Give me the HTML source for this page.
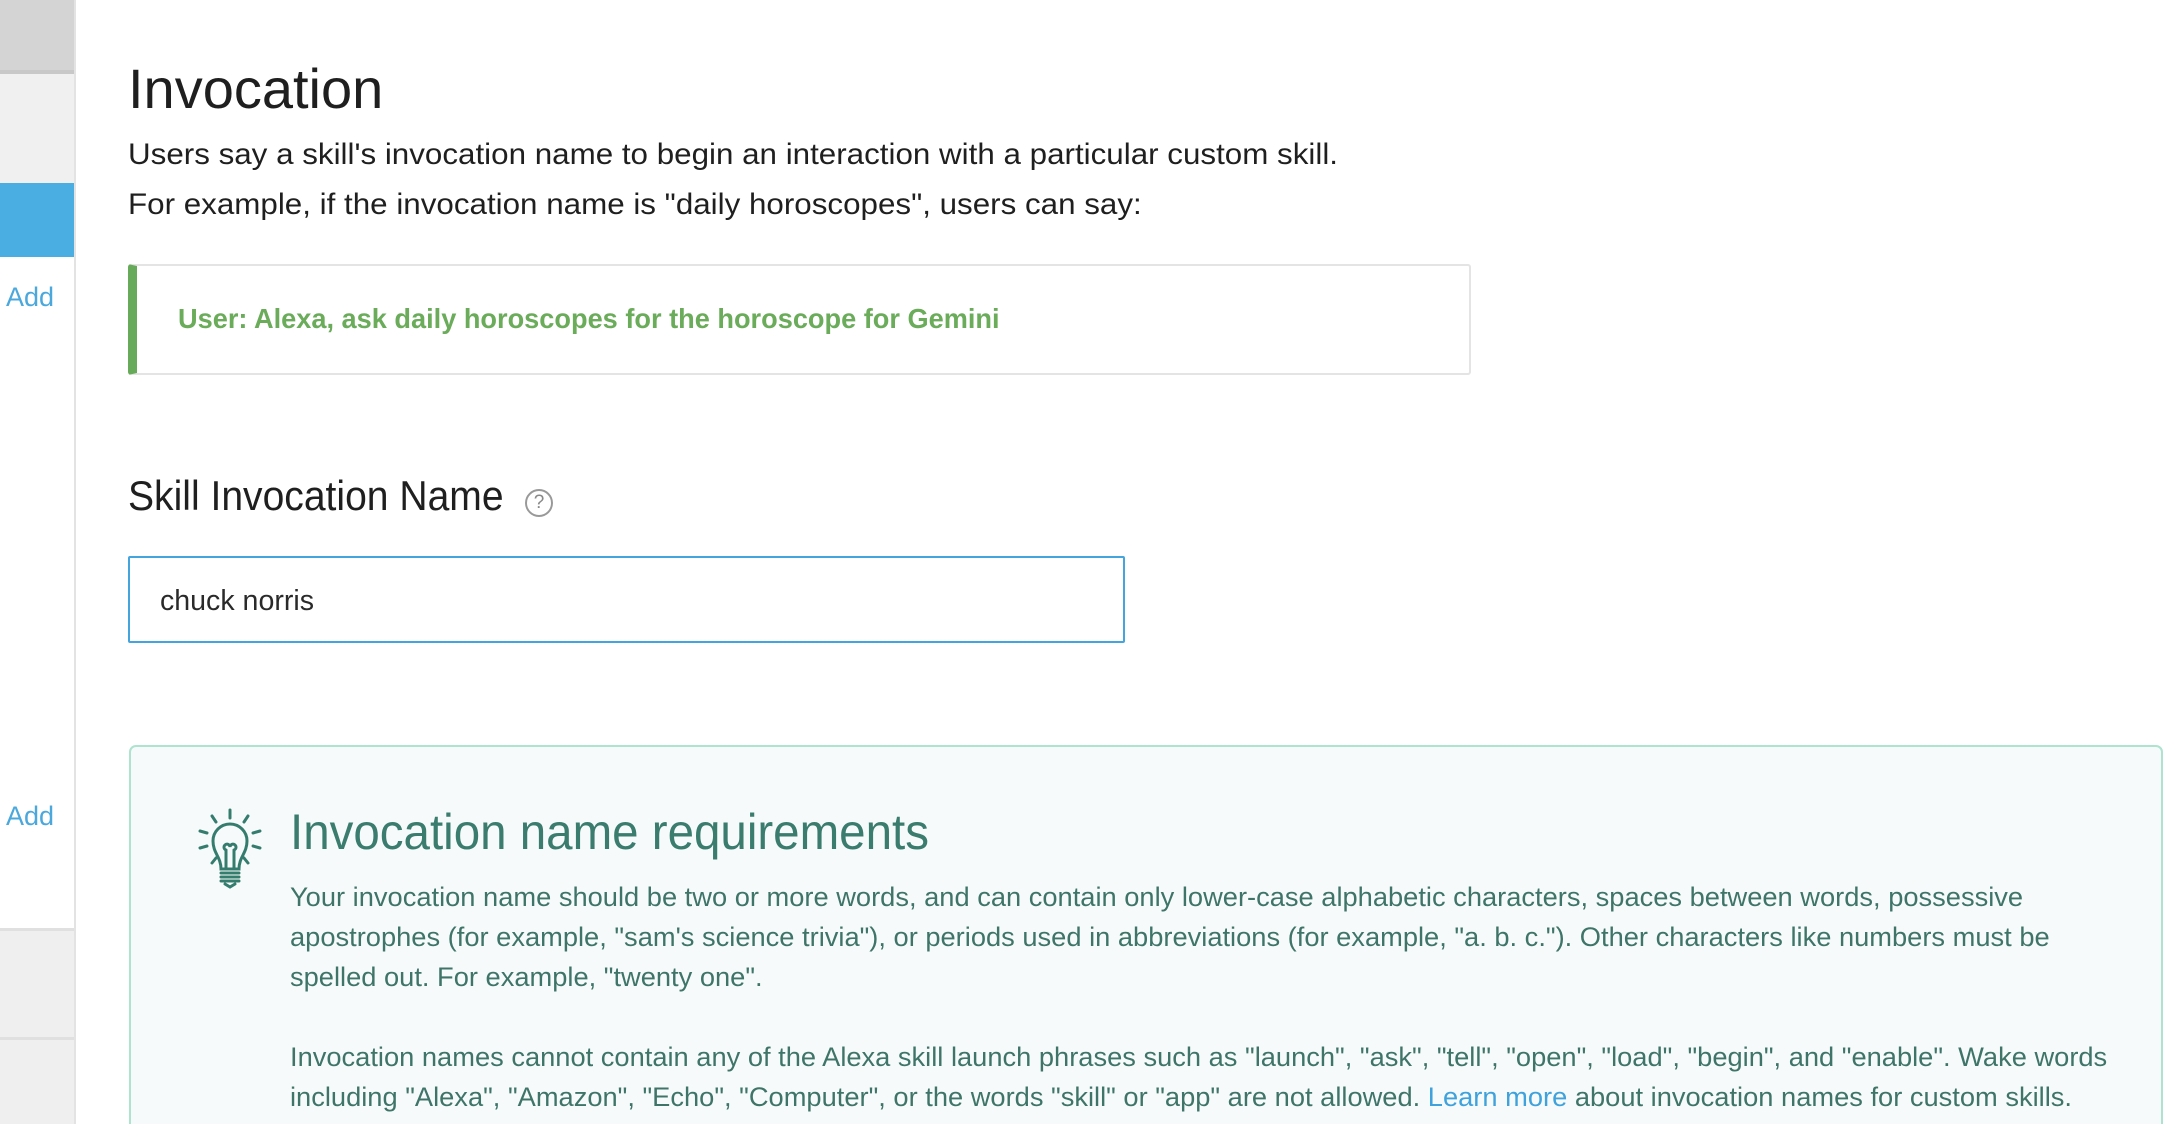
<!DOCTYPE html>
<html><head><meta charset="utf-8"><style>
*{margin:0;padding:0;box-sizing:border-box}
html,body{width:2178px;height:1124px;overflow:hidden;background:#fff;font-family:"Liberation Sans",sans-serif}
#w{position:relative;width:2178px;height:1124px;overflow:hidden}
.sb{position:absolute;left:0;top:0;width:76px;height:1124px;background:#fff;border-right:2px solid #e3e3e3}
.l{position:absolute;white-space:nowrap;transform-origin:0 0}
.add{position:absolute;left:6px;color:#4aa8dd;font-size:27px}
</style></head><body><div id="w">
<div class="sb">
 <div style="position:absolute;left:0;top:0;width:74px;height:70px;background:#d4d4d4"></div>
 <div style="position:absolute;left:0;top:70px;width:74px;height:4px;background:#c8c8c8"></div>
 <div style="position:absolute;left:0;top:74px;width:74px;height:109px;background:#f0f0f0"></div>
 <div style="position:absolute;left:0;top:183px;width:74px;height:74px;background:#4aaee2"></div>
 <div class="add l" style="top:282px">Add</div>
 <div class="add l" style="top:801px">Add</div>
 <div style="position:absolute;left:0;top:928px;width:74px;height:196px;background:#efefef;border-top:3px solid #e0e0e0"></div>
 <div style="position:absolute;left:0;top:1037px;width:74px;height:3px;background:#e0e0e0"></div>
</div>

<div class="l" style="left:128px;top:56px;font-size:56px;color:#1f1f1f">Invocation</div>
<div class="l" style="left:128px;top:130px;font-size:30px;color:#1f1f1f;line-height:50px;transform:scaleX(1.045)">Users say a skill's invocation name to begin an interaction with a particular custom skill.<br>For example, if the invocation name is "daily horoscopes", users can say:</div>

<div style="position:absolute;left:128px;top:264px;width:1343px;height:111px;border:2px solid #e4e4e4;border-left:9px solid #67ab5a;border-radius:3px"></div>
<div class="l" style="left:178px;top:303px;font-size:28px;font-weight:bold;color:#6aac5a;transform:scaleX(.97)">User: Alexa, ask daily horoscopes for the horoscope for Gemini</div>

<div class="l" style="left:128px;top:472px;font-size:42px;color:#1f1f1f;transform:scaleX(.93)">Skill Invocation Name</div>
<div style="position:absolute;left:525px;top:489px;width:28px;height:28px;border:2px solid #999;border-radius:50%;color:#888;font-size:19px;text-align:center;line-height:24px">?</div>

<div style="position:absolute;left:128px;top:556px;width:997px;height:87px;border:2px solid #44a5de;border-radius:2px"></div>
<div class="l" style="left:160px;top:585px;font-size:29px;color:#2a2a2a;transform:scaleX(.985)">chuck norris</div>

<div style="position:absolute;left:129px;top:745px;width:2034px;height:379px;border:2px solid #ade3cf;border-bottom:none;border-radius:7px 7px 0 0;background:#f7fafa"></div>
<svg style="position:absolute;left:190px;top:805px" width="80" height="85" viewBox="0 0 80 85" fill="none" stroke="#347d6e" stroke-width="3" stroke-linecap="round">
 <line x1="40" y1="5" x2="40" y2="13"/>
 <line x1="22" y1="11" x2="26" y2="17"/><line x1="58" y1="11" x2="54" y2="17"/>
 <line x1="10" y1="26" x2="17" y2="28"/><line x1="70" y1="26" x2="63" y2="28"/>
 <line x1="10" y1="43" x2="17" y2="41"/><line x1="70" y1="43" x2="63" y2="41"/>
 <line x1="22" y1="58" x2="26" y2="53"/><line x1="58" y1="58" x2="54" y2="53"/>
 <path d="M31 64 C31 52 23 48 23 36 A17 17 0 0 1 57 36 C57 48 49 52 49 64 Z"/>
 <path d="M36 64 V45 M44 64 V45 M36 45 a3 3 0 1 1 4 -3 a3 3 0 1 1 4 3"/>
 <line x1="31" y1="68" x2="49" y2="68"/><line x1="31" y1="72" x2="49" y2="72"/><line x1="31" y1="76" x2="49" y2="76"/>
 <path d="M35 79 L40 82 L45 79"/>
</svg>
<div class="l" style="left:290px;top:803px;font-size:50px;color:#3a7c6e;transform:scaleX(.95)">Invocation name requirements</div>
<div class="l" style="left:290px;top:877px;font-size:27px;line-height:40px;color:#3e7568;transform:scaleX(1.01)">Your invocation name should be two or more words, and can contain only lower-case alphabetic characters, spaces between words, possessive<br>apostrophes (for example, "sam's science trivia"), or periods used in abbreviations (for example, "a. b. c."). Other characters like numbers must be<br>spelled out. For example, "twenty one".<br><br>Invocation names cannot contain any of the Alexa skill launch phrases such as "launch", "ask", "tell", "open", "load", "begin", and "enable". Wake words<br>including "Alexa", "Amazon", "Echo", "Computer", or the words "skill" or "app" are not allowed. <span style="color:#3fa2dc">Learn more</span> about invocation names for custom skills.</div>
</div></body></html>
